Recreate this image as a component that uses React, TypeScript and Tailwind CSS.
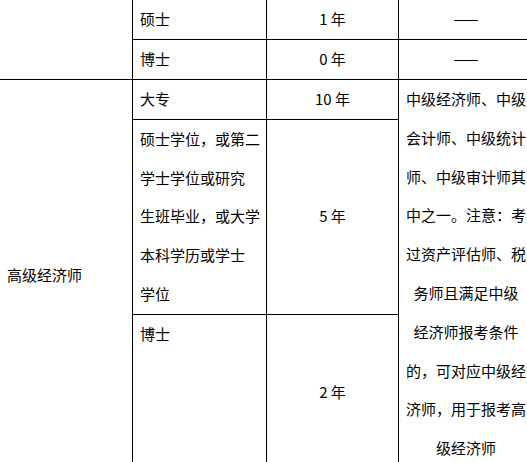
import React from "react";

const degreeLines = ["硕士学位，或第二", "学士学位或研究", "生班毕业，或大学", "本科学历或学士", "学位"];

const noteLines = [
  "中级经济师、中级",
  "会计师、中级统计",
  "师、中级审计师其",
  "中之一。注意：考",
  "过资产评估师、税",
  "务师且满足中级",
  "经济师报考条件",
  "的，可对应中级经",
  "济师，用于报考高",
  "级经济师",
];

const renderLines = (items: string[]) =>
  items.map((line, i) => (
    <React.Fragment key={i}>
      {line}
      {i < items.length - 1 && <br />}
    </React.Fragment>
  ));

const cell = "border border-black px-[7px] py-0 whitespace-nowrap";

export default function App() {
  return (
    <div className="w-[527px] h-[462px] overflow-hidden bg-white text-black">
      <table className="-ml-px -mt-px table-fixed border-collapse w-[534px] text-[15px] leading-[38.8px] font-['Noto_Sans_CJK_SC','Noto_Sans',sans-serif]">
        <colgroup>
          <col className="w-[133px]" />
          <col className="w-[134px]" />
          <col className="w-[132px]" />
          <col className="w-[135px]" />
        </colgroup>
        <tbody>
          <tr className="h-[40px]">
            <td className={cell} rowSpan={2}></td>
            <td className={cell}>硕士</td>
            <td className={`${cell} text-center`}>1 年</td>
            <td className={`${cell} text-center`}>——</td>
          </tr>
          <tr className="h-[40px]">
            <td className={cell}>博士</td>
            <td className={`${cell} text-center`}>0 年</td>
            <td className={`${cell} text-center`}>——</td>
          </tr>
          <tr className="h-[39px]">
            <td className={`${cell} px-[6px] align-middle`} rowSpan={3}>
              高级经济师
            </td>
            <td className={cell}>大专</td>
            <td className={`${cell} text-center`}>10 年</td>
            <td className={`${cell} text-center align-top`} rowSpan={3}>
              {renderLines(noteLines)}
            </td>
          </tr>
          <tr className="h-[195px]">
            <td className={`${cell} align-top`}>{renderLines(degreeLines)}</td>
            <td className={`${cell} text-center align-middle`}>5 年</td>
          </tr>
          <tr className="h-[156px]">
            <td className={`${cell} align-top`}>博士</td>
            <td className={`${cell} text-center align-middle`}>2 年</td>
          </tr>
        </tbody>
      </table>
    </div>
  );
}
